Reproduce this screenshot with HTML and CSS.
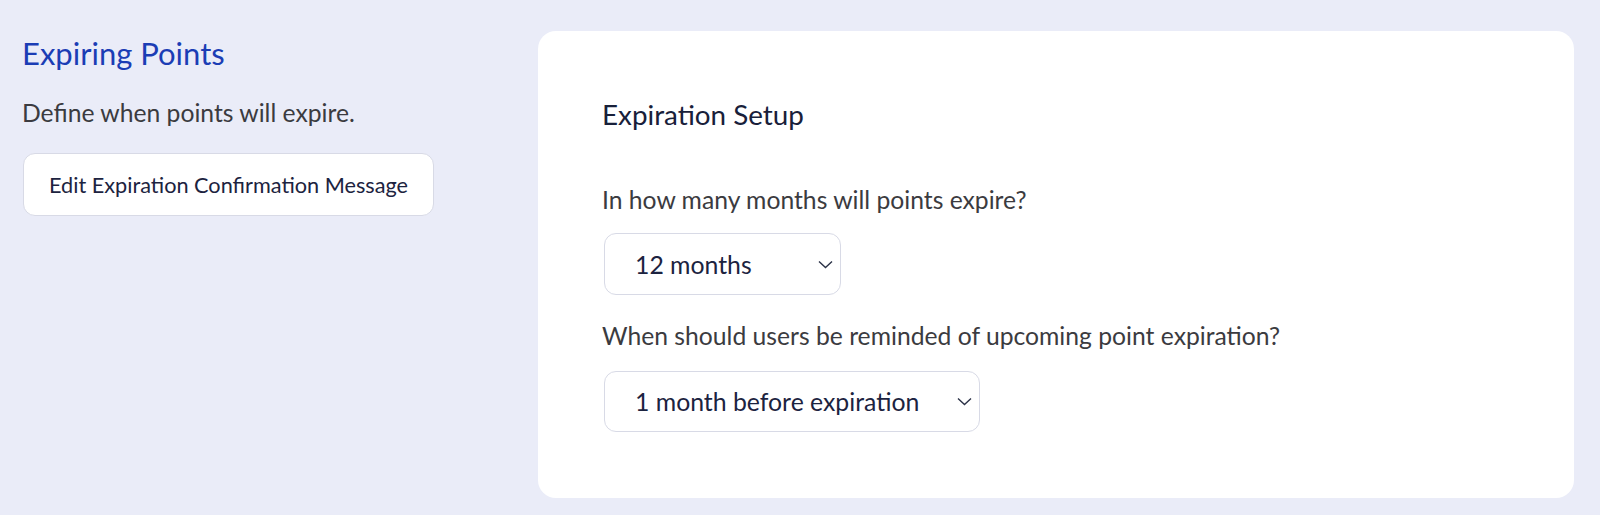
FILE: index.html
```html
<!DOCTYPE html>
<html lang="en">
<head>
    <meta charset="UTF-8" />
    <meta name="viewport" content="width=device-width, initial-scale=1.0" />
    <title>Expiring Points</title>
    <link rel="stylesheet" href="styles.css">
</head>
<body>
    <div class="page">
        <!-- Left column: section intro -->
        <div class="intro">
            <h2 class="intro-title">Expiring Points</h2>
            <p class="intro-text">Define when points will expire.</p>
            <button class="btn-outline" type="button">Edit Expiration Confirmation Message</button>
        </div>

        <!-- Right column: settings card -->
        <div class="card">
            <h3 class="card-title">Expiration Setup</h3>

            <div class="field field-months">
                <div class="field-label">In how many months will points expire?</div>
                <div class="select select-short">
                    <span>12 months</span>
                    <svg class="chevron" width="15" height="9" viewBox="0 0 15 9"><polyline points="1,1.5 7.5,7.5 14,1.5" fill="none" stroke="#2b3247" stroke-width="1.4"/></svg>
                </div>
            </div>

            <div class="field field-reminder">
                <div class="field-label">When should users be reminded of upcoming point expiration?</div>
                <div class="select select-long">
                    <span>1 month before expiration</span>
                    <svg class="chevron" width="15" height="9" viewBox="0 0 15 9"><polyline points="1,1.5 7.5,7.5 14,1.5" fill="none" stroke="#2b3247" stroke-width="1.4"/></svg>
                </div>
            </div>
        </div>
    </div>
</body>
</html>
```

FILE: styles.css
```css
body, html {
    margin: 0;
    padding: 0;
    height: 100%;
    background-color: #eaecf8;
    font-family: 'Lato', 'Open Sans', sans-serif;
}

.page {
    display: flex;
    padding: 31px 26px 17px 22px;
}

/* Left column */
.intro {
    flex: 0 0 516px;
    display: flex;
    flex-direction: column;
    align-items: flex-start;
}

.intro-title {
    margin: 4px 0 0 0;
    font-size: 31px;
    font-weight: 400;
    line-height: 37px;
    color: #1b3db5;
}

.intro-text {
    margin: 26px 0 0 0;
    font-size: 24.7px;
    line-height: 29px;
    color: #3b3b40;
}

.btn-outline {
    margin: 26px 0 0 1px;
    height: 63px;
    padding: 0 25px;
    font-family: inherit;
    font-size: 21.7px;
    color: #1c2340;
    background-color: #ffffff;
    border: 1px solid #d8dae6;
    border-radius: 12px;
}

/* Settings card */
.card {
    flex: 1;
    background-color: #ffffff;
    border-radius: 18px;
    padding: 67px 64px 66px 64px;
}

.card-title {
    margin: 0;
    font-size: 27.8px;
    font-weight: 400;
    line-height: 34px;
    color: #18203a;
}

.field {
    display: flex;
    flex-direction: column;
    align-items: flex-start;
}

.field-months {
    margin-top: 53px;
}

.field-reminder {
    margin-top: 26px;
}

.field-label {
    font-size: 24.7px;
    line-height: 29px;
    color: #3b3b40;
}

/* Fake dropdown */
.select {
    margin: 19px 0 0 2px;
    height: 62px;
    box-sizing: border-box;
    display: flex;
    align-items: center;
    justify-content: space-between;
    padding: 0 7px 0 30px;
    background-color: #ffffff;
    border: 1px solid #d8dae6;
    border-radius: 12px;
    font-size: 24.8px;
    color: #1c2340;
}

.select-short {
    width: 237px;
}

.select-long {
    margin-top: 21px;
    width: 376px;
    height: 61px;
}

.chevron {
    display: block;
}
```
